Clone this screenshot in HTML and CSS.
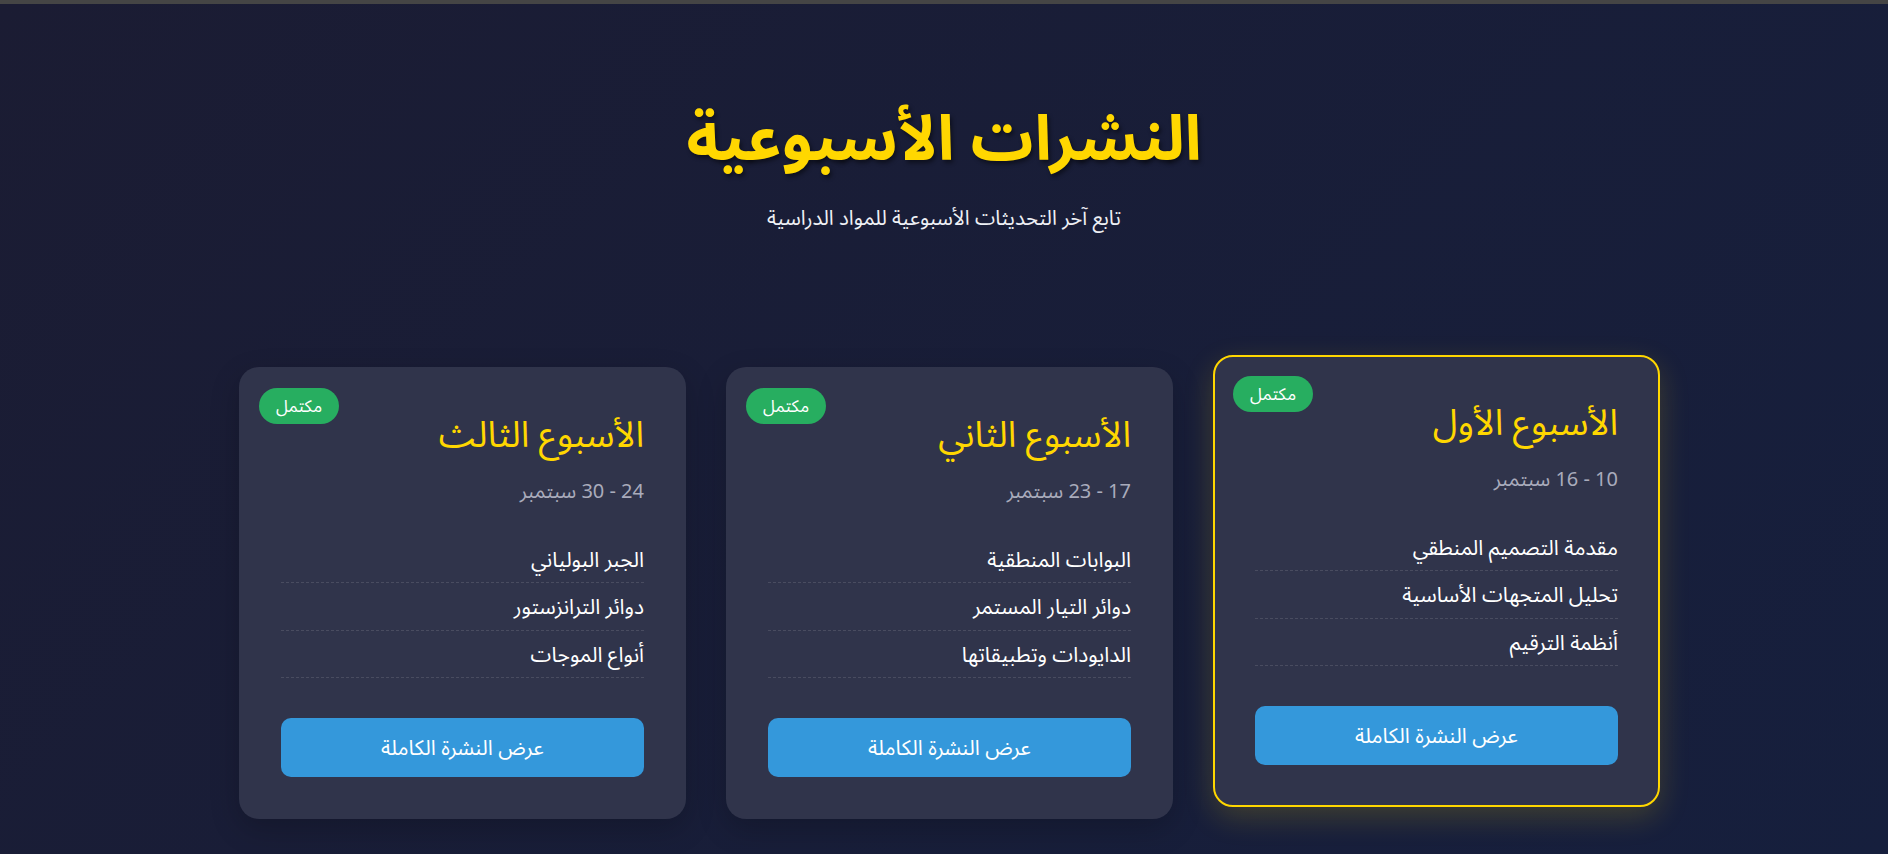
FILE: index.html
```html
<!DOCTYPE html>
<html lang="ar" dir="rtl">
<head>
<meta charset="utf-8">
<title>النشرات الأسبوعية</title>
<link rel="stylesheet" href="styles.css">
</head>
<body>
<div class="topbar"></div>
<header class="hero">
  <h1 class="hero-title">النشرات الأسبوعية</h1>
  <p class="hero-sub">تابع آخر التحديثات الأسبوعية للمواد الدراسية</p>
</header>
<main class="cards">
  <article class="card card-active">
    <span class="badge">مكتمل</span>
    <h2 class="card-title">الأسبوع الأول</h2>
    <p class="card-date">10 - 16 سبتمبر</p>
    <ul class="topics">
      <li>مقدمة التصميم المنطقي</li>
      <li>تحليل المتجهات الأساسية</li>
      <li>أنظمة الترقيم</li>
    </ul>
    <button class="card-btn">عرض النشرة الكاملة</button>
  </article>
  <article class="card">
    <span class="badge">مكتمل</span>
    <h2 class="card-title">الأسبوع الثاني</h2>
    <p class="card-date">17 - 23 سبتمبر</p>
    <ul class="topics">
      <li>البوابات المنطقية</li>
      <li>دوائر التيار المستمر</li>
      <li>الدايودات وتطبيقاتها</li>
    </ul>
    <button class="card-btn">عرض النشرة الكاملة</button>
  </article>
  <article class="card">
    <span class="badge">مكتمل</span>
    <h2 class="card-title">الأسبوع الثالث</h2>
    <p class="card-date">24 - 30 سبتمبر</p>
    <ul class="topics">
      <li>الجبر البولياني</li>
      <li>دوائر الترانزستور</li>
      <li>أنواع الموجات</li>
    </ul>
    <button class="card-btn">عرض النشرة الكاملة</button>
  </article>
</main>
</body>
</html>
```

FILE: styles.css
```css
* { box-sizing: border-box; }

html, body {
  margin: 0;
  padding: 0;
}

body {
  min-height: 100vh;
  background: linear-gradient(135deg, #1b1c33 0%, #161f3d 100%);
  font-family: "Noto Sans", "Noto Sans Arabic", sans-serif;
  color: #fff;
  overflow: hidden;
}

.topbar {
  height: 4px;
  background: #454545;
}

.hero {
  text-align: center;
  padding-top: 92px;
}

.hero-title {
  margin: 0;
  font-size: 62.5px;
  font-weight: 700;
  line-height: 80px;
  color: #ffd700;
  text-shadow: 2px 3px 4px rgba(0, 0, 0, 0.45);
}

.hero-sub {
  margin: 26px 0 0;
  font-size: 20.5px;
  line-height: 30px;
  color: #eef0f5;
}

.cards {
  display: grid;
  grid-template-columns: repeat(3, 447px);
  gap: 40px;
  justify-content: center;
  padding-left: 11px;
  margin-top: 135px;
}

.card {
  position: relative;
  background: #30344b;
  border: 2px solid transparent;
  border-radius: 20px;
  padding: 40px;
  box-shadow: 0 10px 30px rgba(0, 0, 0, 0.2);
}

.card-active {
  border-color: #ffd700;
  transform: translateY(-12px);
  box-shadow: 0 10px 30px rgba(255, 215, 0, 0.18);
}

.badge {
  position: absolute;
  top: 19px;
  left: 18px;
  height: 36px;
  padding: 0 17px;
  border-radius: 18px;
  background: #27ae60;
  color: #fff;
  font-size: 17px;
  line-height: 36px;
}

.card-title {
  margin: 0;
  font-size: 36px;
  font-weight: 400;
  line-height: 50px;
  color: #ffd700;
}

.card-date {
  margin: 18px 0 0;
  font-size: 20px;
  line-height: 28px;
  color: #a9abbb;
}

.topics {
  list-style: none;
  margin: 30.5px 0 0;
  padding: 0;
}

.topics li {
  padding: 9px 0;
  font-size: 21px;
  line-height: 28.5px;
  border-bottom: 1px dashed rgba(255, 255, 255, 0.12);
}

.card-btn {
  display: block;
  width: 100%;
  height: 59px;
  margin-top: 40px;
  border: none;
  border-radius: 10px;
  background: #3498db;
  color: #fff;
  font-family: inherit;
  font-size: 21px;
}
```
